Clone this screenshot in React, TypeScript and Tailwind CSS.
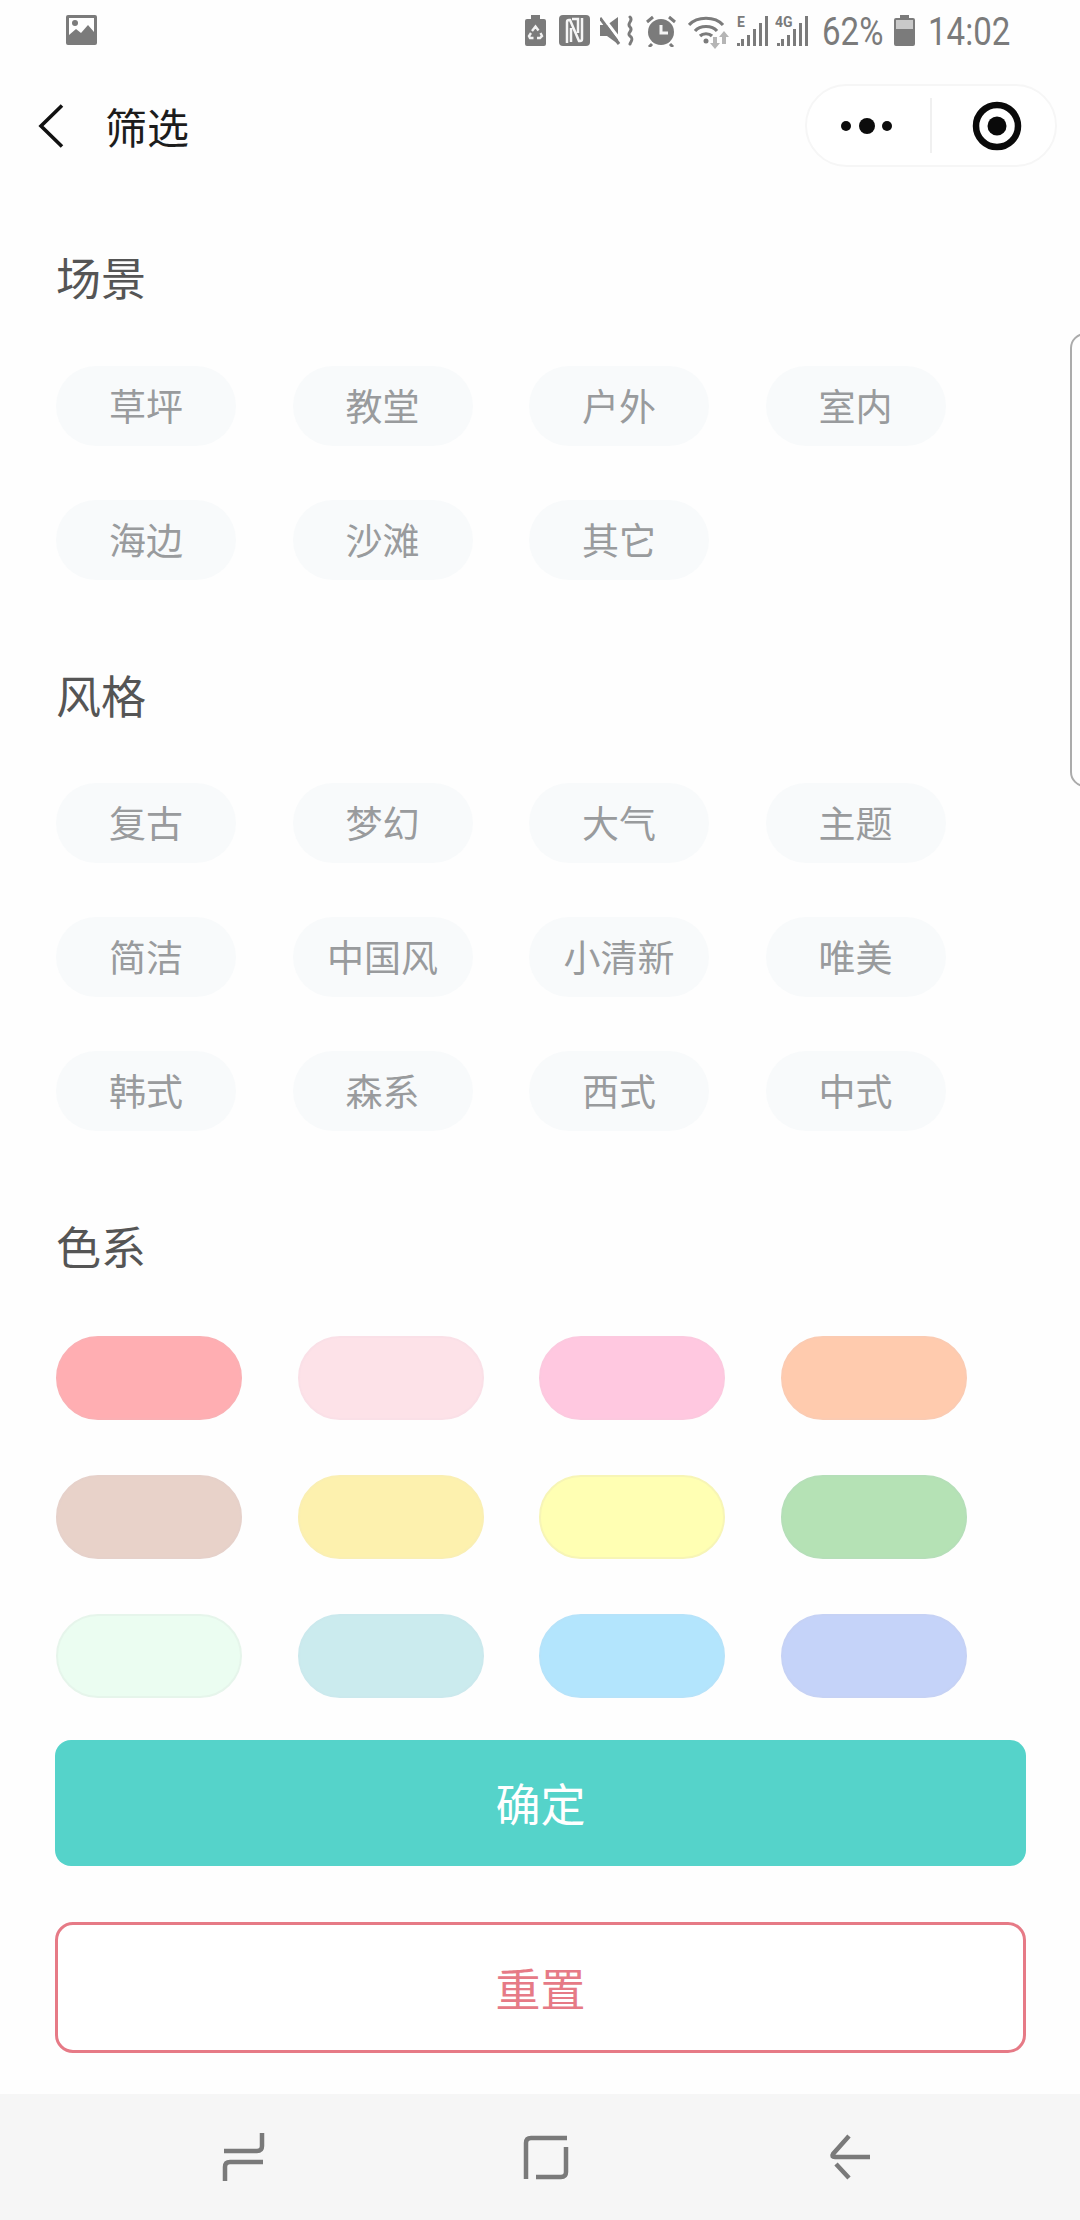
import React from "react";

const CJK = "font-['Noto_Sans_CJK_SC','Noto_Sans',sans-serif]";

function Tag({ label }: { label: string }) {
  return (
    <div className="flex h-[80px] w-[180px] items-center justify-center rounded-[40px] bg-[#f8fafb] pb-[2px] text-[37px] leading-none text-[#999b9d]">
      {label}
    </div>
  );
}

function Title({ label, className }: { label: string; className: string }) {
  return <div className={`h-[62px] text-[45px] leading-[60px] text-[#555555] ${className}`}>{label}</div>;
}

function Pill({ bg }: { bg: string }) {
  return <div className={`h-[84px] w-[186px] rounded-[42px] border-2 ${bg}`} />;
}

const Status = {
  Image: () => (
    <svg width="31" height="30" viewBox="0 0 31 30">
      <path fill="#7b7b7b" fillRule="evenodd" d="M2 0h27a2 2 0 0 1 2 2v26a2 2 0 0 1-2 2H2a2 2 0 0 1-2-2V2a2 2 0 0 1 2-2Zm1 3v17l7-6 5 4 7-8 6 7V3Z" />
      <circle cx="9" cy="8" r="3" fill="#7b7b7b" />
    </svg>
  ),
  Recycle: () => (
    <svg width="21" height="31" viewBox="0 0 21 31">
      <path fill="#7b7b7b" d="M6 0h9v4h4a2 2 0 0 1 2 2v23a2 2 0 0 1-2 2H2a2 2 0 0 1-2-2V6a2 2 0 0 1 2-2h4Z" />
      <path fill="none" stroke="#f2f2f2" strokeWidth="2.4" d="m7 16 3.500-4.500 3 4M15.500 18l1.500 3-2 2h-3M8.500 23H5l-1-2 2-3" />
    </svg>
  ),
  N: () => (
    <svg width="31" height="31" viewBox="0 0 31 31">
      <rect width="31" height="31" rx="4" fill="#7b7b7b" />
      <path fill="none" stroke="#f5f5f5" strokeWidth="2.500" d="M8 28V7q0-2 2-2h1l9 21h1q2 0 2-2V3M13 4h6v14M12 13v14" />
    </svg>
  ),
  Mute: () => (
    <svg width="35" height="31" viewBox="0 0 35 31">
      <path fill="#7b7b7b" d="M0 10h7L18 2v27L7 21H0Z" />
      <path stroke="#fff" strokeWidth="3" d="m2 1 22 29" />
      <path stroke="#7b7b7b" strokeWidth="3" d="m0 3 19 26" />
      <path fill="none" stroke="#7b7b7b" strokeWidth="3" strokeLinecap="round" d="M30 2c4 4-4 6 0 10s-4 6 0 9 1 5 0 8" />
    </svg>
  ),
  Alarm: () => (
    <svg width="32" height="32" viewBox="0 0 32 32">
      <circle cx="16" cy="17" r="13" fill="#7b7b7b" />
      <path fill="none" stroke="#f5f5f5" strokeWidth="3" d="M16 10v8h7" />
      <path stroke="#7b7b7b" strokeWidth="3" d="M2 7 8 2M30 7l-6-5M7 29l-3 3M25 29l3 3" />
    </svg>
  ),
  Wifi: () => (
    <svg width="42" height="34" viewBox="0 0 42 34">
      <path fill="none" stroke="#7b7b7b" strokeWidth="3.200" d="M1 10C9 1 27 1 35 10M7 16c5-6 17-6 22 0M12 21c3-3 9-3 12 0" />
      <circle cx="18" cy="26" r="2.500" fill="#7b7b7b" />
      <path fill="#b5b5b5" d="M25 22h4v6h3l-5 6-5-6h3ZM36 16l5 6h-3v7h-4v-7h-3Z" />
    </svg>
  ),
  Signal: ({ label, w }: { label: string; w: number }) => (
    <svg width={w} height="31" viewBox={`0 0 ${w} 31`}>
      <text x="0" y="12" fontFamily="Roboto, sans-serif" fontSize="14" fontWeight="700" fill="#7b7b7b">{label}</text>
      <path fill="#7b7b7b" d={`M${w - 3} 1h3v30h-3ZM${w - 9} 8h3v23h-3ZM${w - 15} 14h3v17h-3ZM${w - 21} 20h3v11h-3ZM${w - 27} 24h3v7h-3ZM${w - 31} 28h3v3h-3Z`} />
    </svg>
  ),
  Battery: () => (
    <svg width="21" height="31" viewBox="0 0 21 31">
      <path fill="#7b7b7b" d="M6 0h9v3h4a2 2 0 0 1 2 2v24a2 2 0 0 1-2 2H2a2 2 0 0 1-2-2V5a2 2 0 0 1 2-2h4Z" />
      <rect x="2" y="5" width="17" height="9" fill="#c9c9c9" />
    </svg>
  ),
};

function StatusText({ label, w, className }: { label: string; w: number; className: string }) {
  return (
    <div className={`h-[38px] ${className}`} style={{ width: w }}>
      <span className="inline-block origin-left scale-x-[0.87] whitespace-nowrap font-['Roboto',sans-serif] text-[38px] leading-[38px] text-[#7b7b7b]">
        {label}
      </span>
    </div>
  );
}

export default function App() {
  return (
    <div className={`relative flex h-[2220px] w-[1080px] flex-col overflow-hidden bg-[#fefefe] ${CJK}`}>
      {/* status bar */}
      <div className="flex h-[60px] items-start pl-[66px] pr-[70px] pt-[15px]">
        <Status.Image />
        <div className="ml-auto flex items-start">
          <Status.Recycle />
          <div className="ml-[13px]"><Status.N /></div>
          <div className="ml-[10px]"><Status.Mute /></div>
          <div className="ml-[10px]"><Status.Alarm /></div>
          <div className="ml-[11px]"><Status.Wifi /></div>
          <div className="ml-[7px]"><Status.Signal label="E" w={31} /></div>
          <div className="ml-[7px]"><Status.Signal label="4G" w={33} /></div>
          <StatusText label="62%" w={60} className="ml-[14px] -mt-[2px]" />
          <div className="ml-[12px]"><Status.Battery /></div>
          <StatusText label="14:02" w={82} className="ml-[13px] -mt-[2px]" />
        </div>
      </div>

      {/* header */}
      <div className="flex h-[132px] items-start pl-[38px] pr-[23px] pt-[25px]">
        <svg width="26" height="44" viewBox="0 0 26 44" className="mt-[20px]">
          <path d="M24 1.500 3 22l21 20.500" fill="none" stroke="#111" strokeWidth="3.600" />
        </svg>
        <div className="ml-[41px] mt-[12px] text-[42px] leading-[60px] text-[#1c1c1c]">筛选</div>
        <div className="ml-auto flex h-[83px] w-[252px] items-center rounded-[42px] border-2 border-[#f6f6f6] bg-white">
          <svg width="54" height="18" viewBox="0 0 54 18" className="ml-[33px]">
            <circle cx="6" cy="9" r="5" fill="#0c0c0c" />
            <circle cx="27" cy="9" r="8" fill="#0c0c0c" />
            <circle cx="47" cy="9" r="5" fill="#0c0c0c" />
          </svg>
          <div className="ml-[36px] h-[55px] w-[2px] bg-[#f0f0f0]" />
          <svg width="50" height="50" viewBox="0 0 50 50" className="ml-[40px]">
            <circle cx="25" cy="25" r="21" fill="none" stroke="#0a0a0a" strokeWidth="6.500" />
            <circle cx="25" cy="25" r="9.500" fill="#0a0a0a" />
          </svg>
        </div>
      </div>

      {/* filters */}
      <div className="flex flex-col pl-[56px] pt-[57px]">
        <Title label="场景" className="mb-[57px]" />
        <div className="grid grid-cols-[repeat(4,180px)] gap-x-[56.5px] gap-y-[54px]">
          {["草坪", "教堂", "户外", "室内", "海边", "沙滩", "其它"].map((t) => (
            <Tag key={t} label={t} />
          ))}
        </div>
        <Title label="风格" className="mb-[56px] mt-[85px]" />
        <div className="grid grid-cols-[repeat(4,180px)] gap-x-[56.5px] gap-y-[54px]">
          {["复古", "梦幻", "大气", "主题", "简洁", "中国风", "小清新", "唯美", "韩式", "森系", "西式", "中式"].map((t) => (
            <Tag key={t} label={t} />
          ))}
        </div>
        <Title label="色系" className="mb-[58px] mt-[85px]" />
        <div className="grid grid-cols-[repeat(4,186px)] gap-x-[55.500px] gap-y-[55px]">
          <Pill bg="bg-[#ffaeb2] border-[#fbb0b4]" />
          <Pill bg="bg-[#fde2e8] border-[#fae0e7]" />
          <Pill bg="bg-[#ffc8e0] border-[#fcc9df]" />
          <Pill bg="bg-[#ffcbae] border-[#fbcbb2]" />
          <Pill bg="bg-[#e8d2c9] border-[#e6d1ca]" />
          <Pill bg="bg-[#fdf1ae] border-[#faefb3]" />
          <Pill bg="bg-[#ffffb3] border-[#f7f5b6]" />
          <Pill bg="bg-[#b5e2b5] border-[#b5dfb8]" />
          <Pill bg="bg-[#ebfdf1] border-[#e6f5eb]" />
          <Pill bg="bg-[#cbebee] border-[#cbe9ed]" />
          <Pill bg="bg-[#b3e5fd] border-[#b6e3fa]" />
          <Pill bg="bg-[#c5d3f9] border-[#c6d2f5]" />
        </div>
      </div>

      {/* actions */}
      <div className="flex flex-col pl-[55px] pr-[54px]">
        <div className="mt-[42px] flex h-[126px] items-center justify-center rounded-[16px] bg-[#55d3ca] text-[45px] text-white">
          确定
        </div>
        <div className="mt-[56px] flex h-[131px] items-center justify-center rounded-[18px] border-[3px] border-[#e67a86] bg-white text-[45px] text-[#e67a86]">
          重置
        </div>
      </div>

      {/* navigation bar */}
      <div className="mt-[41px] flex h-[126px] items-start justify-center bg-[#f6f6f6]">
        <svg width="1080" height="126" viewBox="0 2094 1080 126" fill="none" stroke="#7a7a7a" strokeWidth="4.500">
          <path d="M262 2133v13q0 5-5 5h-33M263 2162h-33q-5 0-5 5v14" />
          <path d="M567 2138h-36q-5 0-5 5v36M566 2147v25q0 5-5 5h-25" />
          <path d="M849 2136l-16 18q-2 3 2 3h35M836 2164l13 14" />
        </svg>
      </div>

      {/* edge handle */}
      <div className="absolute left-[1070px] top-[333px] h-[454px] w-[20px] rounded-l-[15px] border-2 border-[#ababab] bg-[#fefefe]" />
    </div>
  );
}
